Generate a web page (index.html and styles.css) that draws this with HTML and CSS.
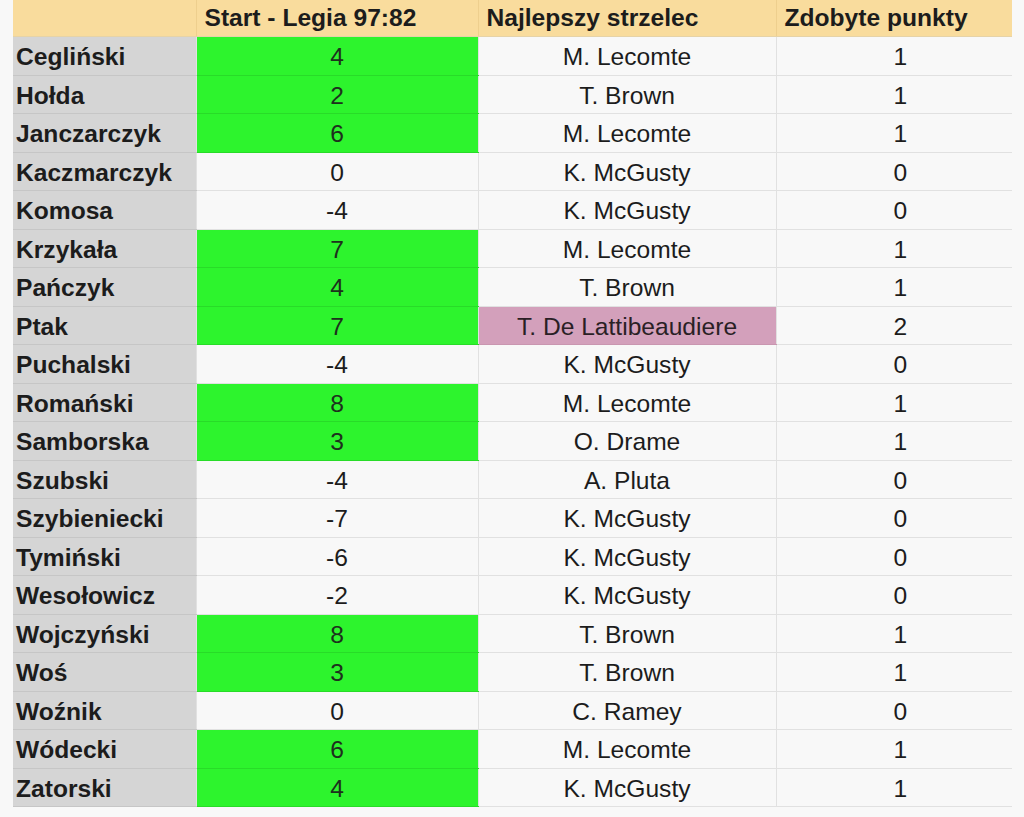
FILE: index.html
```html
<!DOCTYPE html>
<html lang="pl">
<head>
<meta charset="utf-8">
<title>Start - Legia 97:82</title>
<link rel="stylesheet" href="styles.css">
</head>
<body>
<table class="sheet">
  <colgroup>
    <col class="c-name"><col class="c-score"><col class="c-scorer"><col class="c-points">
  </colgroup>
  <thead>
    <tr>
      <th class="h-empty"></th>
      <th>Start - Legia 97:82</th>
      <th>Najlepszy strzelec</th>
      <th>Zdobyte punkty</th>
    </tr>
  </thead>
  <tbody>
    <tr><td class="name">Cegliński</td><td class="num hit">4</td><td class="txt">M. Lecomte</td><td class="pts">1</td></tr>
    <tr><td class="name">Hołda</td><td class="num hit">2</td><td class="txt">T. Brown</td><td class="pts">1</td></tr>
    <tr><td class="name">Janczarczyk</td><td class="num hit">6</td><td class="txt">M. Lecomte</td><td class="pts">1</td></tr>
    <tr><td class="name">Kaczmarczyk</td><td class="num">0</td><td class="txt">K. McGusty</td><td class="pts">0</td></tr>
    <tr><td class="name">Komosa</td><td class="num">-4</td><td class="txt">K. McGusty</td><td class="pts">0</td></tr>
    <tr><td class="name">Krzykała</td><td class="num hit">7</td><td class="txt">M. Lecomte</td><td class="pts">1</td></tr>
    <tr><td class="name">Pańczyk</td><td class="num hit">4</td><td class="txt">T. Brown</td><td class="pts">1</td></tr>
    <tr><td class="name">Ptak</td><td class="num hit">7</td><td class="txt pink">T. De Lattibeaudiere</td><td class="pts">2</td></tr>
    <tr><td class="name">Puchalski</td><td class="num">-4</td><td class="txt">K. McGusty</td><td class="pts">0</td></tr>
    <tr><td class="name">Romański</td><td class="num hit">8</td><td class="txt">M. Lecomte</td><td class="pts">1</td></tr>
    <tr><td class="name">Samborska</td><td class="num hit">3</td><td class="txt">O. Drame</td><td class="pts">1</td></tr>
    <tr><td class="name">Szubski</td><td class="num">-4</td><td class="txt">A. Pluta</td><td class="pts">0</td></tr>
    <tr><td class="name">Szybieniecki</td><td class="num">-7</td><td class="txt">K. McGusty</td><td class="pts">0</td></tr>
    <tr><td class="name">Tymiński</td><td class="num">-6</td><td class="txt">K. McGusty</td><td class="pts">0</td></tr>
    <tr><td class="name">Wesołowicz</td><td class="num">-2</td><td class="txt">K. McGusty</td><td class="pts">0</td></tr>
    <tr><td class="name">Wojczyński</td><td class="num hit">8</td><td class="txt">T. Brown</td><td class="pts">1</td></tr>
    <tr><td class="name">Woś</td><td class="num hit">3</td><td class="txt">T. Brown</td><td class="pts">1</td></tr>
    <tr><td class="name">Woźnik</td><td class="num">0</td><td class="txt">C. Ramey</td><td class="pts">0</td></tr>
    <tr><td class="name">Wódecki</td><td class="num hit">6</td><td class="txt">M. Lecomte</td><td class="pts">1</td></tr>
    <tr><td class="name">Zatorski</td><td class="num hit">4</td><td class="txt">K. McGusty</td><td class="pts">1</td></tr>
  </tbody>
</table>
</body>
</html>
```
FILE: styles.css
```css
html, body {
  margin: 0;
  padding: 0;
  background: #f8f8f8;
}
body {
  padding-left: 13px;
  font-family: "Liberation Sans", Arial, sans-serif;
  color: #1c1c1c;
}
.sheet {
  border-collapse: collapse;
  table-layout: fixed;
  width: 999px;
  font-size: 24.6px;
  line-height: 1.1;
}
.c-name { width: 183px; }
.c-score { width: 282px; }
.c-scorer { width: 298px; }
.c-points { width: 236px; }

.sheet th {
  background: #f9dc9d;
  height: 36px;
  padding: 0 0 0 8px;
  text-align: left;
  font-weight: bold;
  white-space: nowrap;
  border-left: 1px solid #eecf8e;
  border-bottom: 1px solid #e6d3a8;
}
.sheet th.h-empty { border-left: none; }

.sheet td {
  height: 35.5px;
  padding: 2px 0 0 0;
  white-space: nowrap;
  border-bottom: 1px solid #e1e1e1;
  border-left: 1px solid #e1e1e1;
  background: #f8f8f8;
}
.sheet td.name {
  background: #d5d5d5;
  font-weight: bold;
  padding-left: 3px;
  border-left: none;
  border-bottom-color: #c6c6c6;
}
.sheet td.num {
  text-align: center;
}
.sheet td.hit {
  background: #2df42d;
  color: #1d301d;
  border-bottom-color: #28dc28;
}
.sheet td.txt {
  text-align: center;
}
.sheet td.pink {
  background: #d3a0bb;
  color: #2a1f25;
  border-bottom-color: #c996b0;
}
.sheet td.pts {
  text-align: center;
  padding-left: 12px;
}
```
